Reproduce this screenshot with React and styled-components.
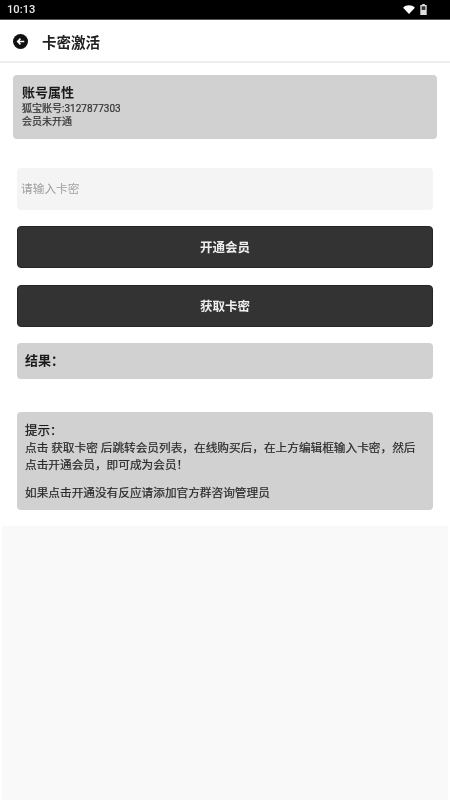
import React from 'react';
import styled, { createGlobalStyle } from 'styled-components';

const GlobalStyle = createGlobalStyle`
  html, body {
    margin: 0;
    padding: 0;
    background: #fff;
  }

  * {
    box-sizing: border-box;
  }
`;

const Page = styled.div`
  width: 450px;
  height: 800px;
  display: flex;
  flex-direction: column;
  overflow: hidden;
  background: #fff;
  color: #1a1a1a;
  font-family: Roboto, "Noto Sans CJK SC", sans-serif;
  filter: blur(0.35px);
`;

const StatusBar = styled.div`
  height: 20px;
  flex: none;
  display: flex;
  align-items: center;
  justify-content: space-between;
  padding: 0 23px 0 7px;
  background: #000;
  border-bottom: 1px solid #555;
  color: #e8e8e8;
  font-size: 11.2px;
  font-weight: 500;
`;

const StatusIcons = styled.div`
  display: flex;
  align-items: center;
  gap: 5px;
`;

const AppBar = styled.header`
  height: 43px;
  flex: none;
  display: flex;
  align-items: center;
  gap: 14px;
  padding: 2px 13px 0;
  border-bottom: 2px solid #eee;
`;

const Title = styled.h1`
  margin: 0;
  font-size: 14.5px;
  font-weight: 700;
  color: #222;
`;

const Content = styled.main`
  flex: none;
  height: 463px;
  display: flex;
  flex-direction: column;
  padding: 12px 13px 0;
`;

const Panel = styled.section`
  background: #d1d1d1;
  border-radius: 4px;
  margin: ${(p) => p.$top || 0}px ${(p) => p.$inset || 0}px 0;
  padding: ${(p) => p.$padding};
  height: ${(p) => p.$height}px;
`;

const AccountTitle = styled.div`
  font-size: 13px;
  font-weight: 700;
  line-height: 19px;
`;

const AccountLine = styled.div`
  font-size: 10px;
  line-height: 13px;
  color: #333;
  -webkit-text-stroke: 0.2px #333;
`;

const CardInput = styled.input`
  display: block;
  height: 42px;
  margin: 29px 4px 0;
  padding: 0 4px;
  border: 0;
  border-radius: 4px;
  outline: 0;
  background: #f4f4f4;
  font: inherit;
  font-size: 11.7px;

  &::placeholder {
    color: #a0a0a0;
    opacity: 1;
  }
`;

const DarkButton = styled.button`
  display: block;
  height: 42px;
  margin: ${(p) => p.$top}px 4px 0;
  padding: 0 0 2px;
  border: 1px solid #262626;
  border-radius: 4px;
  background: #333;
  color: #eee;
  font: inherit;
  font-size: 12.5px;
  font-weight: 700;
`;

const ResultText = styled.div`
  font-size: 13px;
  font-weight: 700;
  line-height: 36px;
`;

const TipTitle = styled.div`
  font-size: 12.5px;
  line-height: 16px;
  -webkit-text-stroke: 0.25px #1a1a1a;
`;

const TipText = styled.p`
  margin: ${(p) => p.$top}px 0 0;
  font-size: 11.67px;
  line-height: 17px;
  color: #2a2a2a;
  -webkit-text-stroke: 0.2px #2a2a2a;
`;

const Footer = styled.div`
  flex: 1;
  background: #f9f9f9;
  margin: 0 2px;
`;

const BackIcon = () => (
  <svg width="15" height="15" viewBox="0 0 16 16">
    <circle cx="8" cy="8" r="8" fill="#111" />
    <path d="M12 8H5.5M8 5L5 8l3 3" fill="none" stroke="#fff" strokeWidth="1.7" />
  </svg>
);

const WifiIcon = () => (
  <svg width="12" height="9" viewBox="0 0 13 10">
    <path d="M0 3C3.6-.6 9.4-.6 13 3L6.5 10z" fill="#fff" />
  </svg>
);

const BatteryIcon = () => (
  <svg width="7" height="11" viewBox="0 0 7 12">
    <path d="M2 0h3v1h2v11H0V1h2z" fill="#ddd" />
    <rect x="1.5" y="2.5" width="4" height="4" fill="#333" />
  </svg>
);

const resultLabel = '结果\uFF1A';
const tipLabel = '提示\uFF1A';
const tipSteps = '点击 获取卡密 后跳转会员列表\uFF0C在线购买后\uFF0C在上方编辑框输入卡密\uFF0C然后点击开通会员\uFF0C即可成为会员\uFF01';

export default function App () {
  return (
    <Page>
      <GlobalStyle />
      <StatusBar>
        <span>10:13</span>
        <StatusIcons>
          <WifiIcon />
          <BatteryIcon />
        </StatusIcons>
      </StatusBar>
      <AppBar>
        <BackIcon />
        <Title>卡密激活</Title>
      </AppBar>
      <Content>
        <Panel $padding="8px 9px" $height={64}>
          <AccountTitle>账号属性</AccountTitle>
          <AccountLine>狐宝账号:3127877303</AccountLine>
          <AccountLine>会员未开通</AccountLine>
        </Panel>
        <CardInput placeholder="请输入卡密" />
        <DarkButton $top={16}>开通会员</DarkButton>
        <DarkButton $top={17}>获取卡密</DarkButton>
        <Panel $inset={4} $top={16} $padding="0 8px" $height={36}>
          <ResultText>{resultLabel}</ResultText>
        </Panel>
        <Panel $inset={4} $top={33} $padding="11px 8px 0" $height={98}>
          <TipTitle>{tipLabel}</TipTitle>
          <TipText $top={1}>{tipSteps}</TipText>
          <TipText $top={11}>如果点击开通没有反应请添加官方群咨询管理员</TipText>
        </Panel>
      </Content>
      <Footer />
    </Page>
  );
}
